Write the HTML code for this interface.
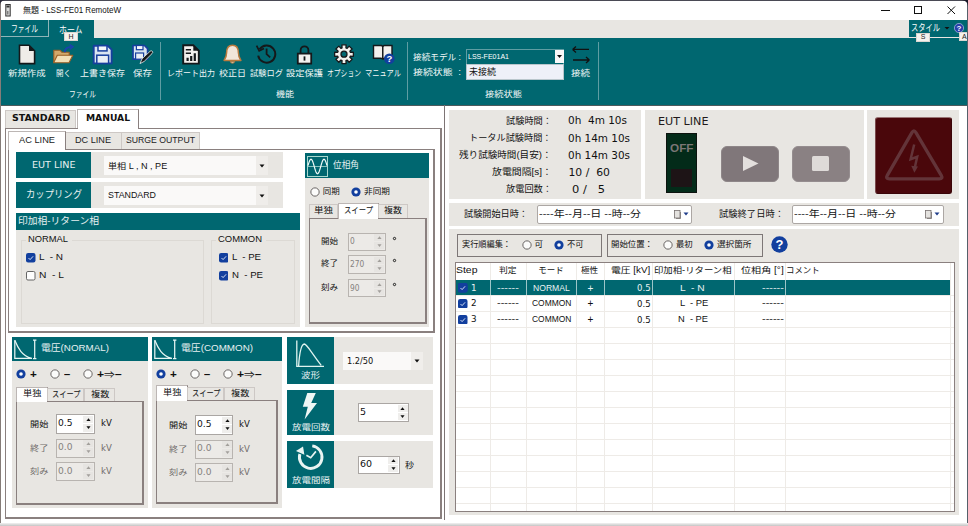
<!DOCTYPE html><html lang="ja"><head><meta charset="utf-8"><title>LSS-FE01 RemoteW</title><style>

html,body{margin:0;padding:0;}
body{width:968px;height:526px;position:relative;overflow:hidden;background:#fff;font-family:"Liberation Sans","Noto Sans CJK JP",sans-serif;}
.b{position:absolute;box-sizing:border-box;}
.t{position:absolute;white-space:pre;transform-origin:0 50%;}

#t0{left:23.00px;transform:scaleX(0.9430);}
#t1{left:10.50px;transform:scaleX(0.7102);}
#t2{left:59.40px;transform:scaleX(0.8328);}
#t3{left:911.00px;transform:scaleX(0.7628);}
#t4{left:68.47px;}
#t5{left:920.66px;}
#t6{left:962.00px;}
#t7{left:8.00px;transform:scaleX(1.1054);}
#t8{left:56.00px;transform:scaleX(0.8815);}
#t9{left:80.00px;transform:scaleX(1.0584);}
#t10{left:132.50px;transform:scaleX(1.1166);}
#t11{left:167.00px;transform:scaleX(0.9409);}
#t12{left:219.00px;transform:scaleX(1.0582);}
#t13{left:250.00px;transform:scaleX(0.9701);}
#t14{left:286.00px;transform:scaleX(1.0877);}
#t15{left:327.00px;transform:scaleX(0.7997);}
#t16{left:365.00px;transform:scaleX(0.8521);}
#t17{left:68.50px;transform:scaleX(0.7938);}
#t18{left:275.50px;transform:scaleX(1.0579);}
#t19{left:484.50px;transform:scaleX(1.0877);}
#t20{left:413.00px;transform:scaleX(1.0162);}
#t21{left:413.00px;transform:scaleX(1.1681);}
#t22{left:468.00px;transform:scaleX(0.9365);}
#t23{left:469.00px;}
#t24{left:571.00px;transform:scaleX(1.1166);}
#t25{left:11.50px;transform:scaleX(0.9944);}
#t26{left:85.50px;transform:scaleX(0.9650);}
#t27{left:18.50px;transform:scaleX(1.0281);}
#t28{left:74.50px;transform:scaleX(1.0136);}
#t29{left:125.50px;transform:scaleX(0.9648);}
#t30{left:31.75px;transform:scaleX(1.0679);}
#t31{left:107.80px;transform:scaleX(1.0682);}
#t32{left:25.50px;transform:scaleX(0.9333);}
#t33{left:107.80px;transform:scaleX(1.0407);}
#t34{left:18.00px;transform:scaleX(1.0292);}
#t35{left:27.50px;transform:scaleX(1.0997);}
#t36{left:218.00px;transform:scaleX(1.1091);}
#t37{left:38.80px;transform:scaleX(1.1725);}
#t38{left:38.80px;transform:scaleX(1.2030);}
#t39{left:231.70px;transform:scaleX(1.1296);}
#t40{left:231.70px;transform:scaleX(1.1311);}
#t41{left:332.50px;transform:scaleX(0.9624);}
#t42{left:322.75px;}
#t43{left:364.25px;transform:scaleX(1.0190);}
#t44{left:314.00px;transform:scaleX(1.1166);}
#t45{left:343.50px;transform:scaleX(0.8657);}
#t46{left:383.75px;transform:scaleX(1.0579);}
#t47{left:321.00px;}
#t48{left:349.80px;transform:scaleX(0.8761);}
#t49{left:321.00px;}
#t50{left:349.80px;transform:scaleX(0.8778);}
#t51{left:321.00px;}
#t52{left:349.80px;transform:scaleX(0.8773);}
#t53{left:40.90px;transform:scaleX(1.0880);}
#t54{left:30.00px;transform:scaleX(1.1636);}
#t55{left:64.00px;transform:scaleX(1.1294);}
#t56{left:97.40px;transform:scaleX(1.2075);}
#t57{left:22.70px;transform:scaleX(1.0814);}
#t58{left:51.65px;transform:scaleX(0.8507);}
#t59{left:90.70px;transform:scaleX(1.0814);}
#t60{left:30.00px;transform:scaleX(1.0755);}
#t61{left:58.40px;transform:scaleX(0.9597);}
#t62{left:100.60px;transform:scaleX(0.9495);}
#t63{left:30.00px;transform:scaleX(1.0755);}
#t64{left:58.40px;transform:scaleX(0.9597);}
#t65{left:100.60px;transform:scaleX(0.9495);}
#t66{left:30.00px;transform:scaleX(1.0755);}
#t67{left:58.40px;transform:scaleX(0.9597);}
#t68{left:100.60px;transform:scaleX(0.9495);}
#t69{left:180.80px;transform:scaleX(1.0909);}
#t70{left:169.90px;transform:scaleX(1.1636);}
#t71{left:203.90px;transform:scaleX(1.1294);}
#t72{left:237.30px;transform:scaleX(1.2075);}
#t73{left:162.60px;transform:scaleX(1.0814);}
#t74{left:191.55px;transform:scaleX(0.8507);}
#t75{left:230.60px;transform:scaleX(1.0814);}
#t76{left:168.70px;transform:scaleX(1.0755);}
#t77{left:197.10px;transform:scaleX(0.9597);}
#t78{left:239.30px;transform:scaleX(0.9495);}
#t79{left:168.70px;transform:scaleX(1.0755);}
#t80{left:197.10px;transform:scaleX(0.9597);}
#t81{left:239.30px;transform:scaleX(0.9495);}
#t82{left:168.70px;transform:scaleX(1.0755);}
#t83{left:197.10px;transform:scaleX(0.9597);}
#t84{left:239.30px;transform:scaleX(0.9495);}
#t85{left:301.00px;transform:scaleX(1.1166);}
#t86{left:346.60px;transform:scaleX(0.8650);}
#t87{left:291.50px;transform:scaleX(1.1171);}
#t88{left:360.00px;}
#t89{left:291.50px;transform:scaleX(1.1171);}
#t90{left:360.00px;}
#t91{left:405.00px;transform:scaleX(1.0569);}
#t92{left:505.50px;transform:scaleX(1.0219);}
#t93{left:568.30px;transform:scaleX(0.9709);}
#t94{left:469.00px;transform:scaleX(1.0183);}
#t95{left:568.30px;transform:scaleX(0.9657);}
#t96{left:459.00px;transform:scaleX(1.0632);}
#t97{left:568.30px;transform:scaleX(0.9657);}
#t98{left:491.50px;transform:scaleX(1.1006);}
#t99{left:568.50px;}
#t100{left:505.50px;transform:scaleX(1.0219);}
#t101{left:571.50px;transform:scaleX(1.0608);}
#t102{left:658.00px;transform:scaleX(1.0628);}
#t103{left:669.85px;transform:scaleX(1.1750);}
#t104{left:464.30px;transform:scaleX(1.0156);}
#t105{left:538.80px;transform:scaleX(1.2220);}
#t106{left:719.00px;transform:scaleX(1.0315);}
#t107{left:793.70px;transform:scaleX(1.2220);}
#t108{left:461.70px;transform:scaleX(0.9605);}
#t109{left:534.55px;}
#t110{left:566.95px;transform:scaleX(0.9697);}
#t111{left:611.00px;transform:scaleX(0.9879);}
#t112{left:675.65px;transform:scaleX(0.9815);}
#t113{left:716.85px;transform:scaleX(1.0113);}
#t114{left:455.50px;transform:scaleX(1.2286);}
#t115{left:499.00px;transform:scaleX(1.0226);}
#t116{left:538.30px;}
#t117{left:580.80px;transform:scaleX(1.0108);}
#t118{left:610.80px;transform:scaleX(1.1524);}
#t119{left:654.40px;transform:scaleX(1.1019);}
#t120{left:740.95px;transform:scaleX(1.1866);}
#t121{left:786.40px;transform:scaleX(0.9878);}
#t122{left:471.20px;transform:scaleX(0.9261);}
#t123{left:497.20px;transform:scaleX(1.2835);}
#t124{left:532.80px;transform:scaleX(1.0117);}
#t125{left:587.38px;}
#t126{left:637.10px;transform:scaleX(0.9492);}
#t127{left:680.00px;transform:scaleX(1.2018);}
#t128{left:761.90px;transform:scaleX(1.2835);}
#t129{left:471.20px;transform:scaleX(0.9261);}
#t130{left:497.20px;transform:scaleX(1.2835);}
#t131{left:531.60px;transform:scaleX(0.9931);}
#t132{left:587.38px;}
#t133{left:637.10px;transform:scaleX(0.9492);}
#t134{left:680.00px;transform:scaleX(1.1063);}
#t135{left:761.90px;transform:scaleX(1.2835);}
#t136{left:471.20px;transform:scaleX(0.9261);}
#t137{left:497.20px;transform:scaleX(1.2835);}
#t138{left:531.60px;transform:scaleX(0.9931);}
#t139{left:587.38px;}
#t140{left:637.10px;transform:scaleX(0.9492);}
#t141{left:678.40px;transform:scaleX(1.0946);}
#t142{left:761.90px;transform:scaleX(1.2835);}
</style></head><body>
<div class="b" style="left:0px;top:0px;width:968px;height:526px;background:#fff;"></div>
<div class="b" style="left:0px;top:0px;width:968px;height:1px;background:#4a4a55;"></div>
<div class="b" style="left:0px;top:0px;width:1.2px;height:526px;background:#857c78;"></div>
<div class="b" style="left:966.5px;top:105.5px;width:1.5px;height:417px;background:#d9d9dc;"></div>
<svg class="b" style="left:5px;top:3.5px;" width="6" height="13" viewBox="0 0 6 13"><rect x="0.8" y="0.5" width="4.4" height="11.5" fill="#d9d9d9" stroke="#333" stroke-width="1"/><rect x="1.5" y="1.5" width="3" height="2" fill="#333"/><rect x="2.2" y="7" width="1.2" height="3.5" fill="#666"/></svg>
<span class="t" id="t0" style="top:4.90px;font-size:8.5px;line-height:10.20px;color:#111;">無題 - LSS-FE01 RemoteW</span>
<svg class="b" style="left:880px;top:5px;" width="12" height="12" viewBox="0 0 12 12"><path d="M1 5.5H10" stroke="#111" stroke-width="1" fill="none"/></svg>
<svg class="b" style="left:913px;top:5px;" width="12" height="12" viewBox="0 0 12 12"><rect x="1.5" y="1.5" width="7" height="7" stroke="#111" stroke-width="1" fill="none"/></svg>
<svg class="b" style="left:946px;top:5px;" width="12" height="12" viewBox="0 0 12 12"><path d="M1.5 1.5L9 9M9 1.5L1.5 9" stroke="#111" stroke-width="1" fill="none"/></svg>
<div class="b" style="left:1px;top:20px;width:967px;height:18px;background:#e8e6e2;"></div>
<div class="b" style="left:1px;top:20px;width:93px;height:18px;background:#006770;"></div>
<div class="b" style="left:1px;top:20px;width:48px;height:17px;background:#006770;border-right:1px solid #8fb5b8;border-bottom:1px solid #8fb5b8;"></div>
<span class="t" id="t1" style="top:23.30px;font-size:9.5px;line-height:11.40px;color:#fff;">ファイル</span>
<span class="t" id="t2" style="top:23.50px;font-size:9.5px;line-height:11.40px;color:#fff;">ホーム</span>
<div class="b" style="left:909px;top:20px;width:59px;height:17px;background:#006770;"></div>
<span class="t" id="t3" style="top:22.30px;font-size:9.5px;line-height:11.40px;color:#fff;">スタイル</span>
<svg class="b" style="left:944px;top:25px;" width="6" height="6" viewBox="0 0 6 6"><path d="M0.5 2L5.5 2L3 4.5Z" fill="#111"/></svg>
<svg class="b" style="left:954px;top:23px;" width="10" height="10" viewBox="0 0 10 10"><circle cx="5" cy="5" r="4.6" fill="#2a3fa8" stroke="#c9d2f5" stroke-width="0.6"/><text x="5" y="8" font-size="8" font-weight="bold" fill="#fff" text-anchor="middle" font-family="Liberation Sans,sans-serif">?</text></svg>
<div class="b" style="left:1px;top:37.5px;width:967px;height:67px;background:#006770;"></div>
<div class="b" style="left:1px;top:104.5px;width:967px;height:1px;background:#4d5a5c;"></div>
<div class="b" style="left:64px;top:32px;width:14px;height:9px;background:#f4f2ee;border:1px solid #d9d6d0;"></div>
<span class="t" id="t4" style="top:32.60px;font-size:7px;line-height:8.40px;color:#222;">H</span>
<div class="b" style="left:916px;top:32.5px;width:14px;height:9px;background:#f4f2ee;border:1px solid #d9d6d0;"></div>
<span class="t" id="t5" style="top:33.00px;font-size:7px;line-height:8.40px;color:#222;">S</span>
<div class="b" style="left:959px;top:32px;width:9px;height:9px;background:#f4f2ee;border:1px solid #d9d6d0;"></div>
<span class="t" id="t6" style="top:32.60px;font-size:7px;line-height:8.40px;color:#222;">A</span>
<div class="b" style="left:160px;top:42px;width:1px;height:58px;background:#5f9da3;"></div>
<div class="b" style="left:407px;top:42px;width:1px;height:58px;background:#5f9da3;"></div>
<div class="b" style="left:598px;top:42px;width:1px;height:58px;background:#5f9da3;"></div>
<span class="t" id="t7" style="top:67.50px;font-size:8.5px;line-height:10.20px;color:#f2f7f7;">新規作成</span>
<span class="t" id="t8" style="top:67.50px;font-size:8.5px;line-height:10.20px;color:#f2f7f7;">開く</span>
<span class="t" id="t9" style="top:67.50px;font-size:8.5px;line-height:10.20px;color:#f2f7f7;">上書き保存</span>
<span class="t" id="t10" style="top:67.50px;font-size:8.5px;line-height:10.20px;color:#f2f7f7;">保存</span>
<span class="t" id="t11" style="top:67.50px;font-size:8.5px;line-height:10.20px;color:#f2f7f7;">レポート出力</span>
<span class="t" id="t12" style="top:67.50px;font-size:8.5px;line-height:10.20px;color:#f2f7f7;">校正日</span>
<span class="t" id="t13" style="top:67.50px;font-size:8.5px;line-height:10.20px;color:#f2f7f7;">試験ログ</span>
<span class="t" id="t14" style="top:67.50px;font-size:8.5px;line-height:10.20px;color:#f2f7f7;">設定保護</span>
<span class="t" id="t15" style="top:67.50px;font-size:8.5px;line-height:10.20px;color:#f2f7f7;">オプション</span>
<span class="t" id="t16" style="top:67.50px;font-size:8.5px;line-height:10.20px;color:#f2f7f7;">マニュアル</span>
<span class="t" id="t17" style="top:88.90px;font-size:8.5px;line-height:10.20px;color:#f2f7f7;">ファイル</span>
<span class="t" id="t18" style="top:88.90px;font-size:8.5px;line-height:10.20px;color:#f2f7f7;">機能</span>
<span class="t" id="t19" style="top:88.90px;font-size:8.5px;line-height:10.20px;color:#f2f7f7;">接続状態</span>
<span class="t" id="t20" style="top:51.90px;font-size:8.5px;line-height:10.20px;color:#f2f7f7;">接続モデル :</span>
<span class="t" id="t21" style="top:67.40px;font-size:8.5px;line-height:10.20px;color:#f2f7f7;">接続状態  :</span>
<div class="b" style="left:466px;top:48.7px;width:98px;height:15.3px;background:#006770;border:1px solid #5f9da3;border-bottom:none;"></div>
<span class="t" id="t22" style="top:52.30px;font-size:7.5px;line-height:9.00px;color:#fff;">LSS-FE01A1</span>
<div class="b" style="left:555px;top:50px;width:9px;height:13px;background:#f8f8f8;"></div>
<svg class="b" style="left:556px;top:54px;" width="7" height="5" viewBox="0 0 7 5"><path d="M1 1L6 1L3.5 4Z" fill="#111"/></svg>
<div class="b" style="left:466px;top:64px;width:98px;height:16px;background:#eef0f8;border:1px solid #b9c6cc;"></div>
<span class="t" id="t23" style="top:67.10px;font-size:9px;line-height:10.80px;color:#111;">未接続</span>
<svg class="b" style="left:571px;top:45px;" width="20" height="20" viewBox="0 0 20 20"><path d="M1.6 4.4H18M1.6 4.4L5 1.4M1.6 4.4L5 7.4M18.4 15H2M18.4 15L15 12M18.4 15L15 18" stroke="#111" stroke-width="1.3" fill="none"/></svg>
<span class="t" id="t24" style="top:67.90px;font-size:8.5px;line-height:10.20px;color:#f2f7f7;">接続</span>
<svg class="b" style="left:17.5px;top:44px;" width="19" height="21" viewBox="0 0 19 21"><path d="M1.5 1.3H11L16.6 6.9V19.6H1.5Z" fill="#efece8" stroke="#15181a" stroke-width="1.6"/><path d="M11 1.3V6.9H16.6Z" fill="#15181a"/></svg>
<svg class="b" style="left:52px;top:44px;" width="23" height="20" viewBox="0 0 23 20"><path d="M1.8 18.6V6.3H8.2L9.8 8.2H17.2V11.5" fill="#d2a86a" stroke="#9a5f24" stroke-width="1.1" stroke-linejoin="round"/><path d="M5.3 11.2H20.8L17 18.8H1.6Z" fill="#f2dfb6" stroke="#9a5f24" stroke-width="1.1" stroke-linejoin="round"/><path d="M12.8 8.3C12.8 4.8 15.2 2.8 19.2 2.8" stroke="#1b43ad" stroke-width="1.8" fill="none"/><path d="M17.6 0.6L21 2.9L17.6 5.4" stroke="#1b43ad" stroke-width="1.5" fill="none"/></svg>
<svg class="b" style="left:92px;top:44px;" width="21" height="21" viewBox="0 0 21 21"><path d="M1.7 1.7H15.6L19.6 5.7V19.4H1.7Z" fill="#d9e5f1" stroke="#173f9e" stroke-width="1.9" stroke-linejoin="round"/><rect x="6" y="1.7" width="9" height="5.2" fill="#f4f7fb" stroke="#173f9e" stroke-width="1.5"/><rect x="4.8" y="11.2" width="11.8" height="8.2" fill="#e9eff6" stroke="#173f9e" stroke-width="1.5"/></svg>
<svg class="b" style="left:131px;top:44px;" width="24" height="21" viewBox="0 0 24 21"><path d="M2 1.5H13.5L16.6 4.6V15.2H2Z" fill="#d9e5f1" stroke="#173f9e" stroke-width="1.7" stroke-linejoin="round"/><rect x="5.4" y="1.5" width="6.6" height="4.2" fill="#f4f7fb" stroke="#173f9e" stroke-width="1.2"/><rect x="4.6" y="9" width="8" height="6.2" fill="#e9eff6" stroke="#173f9e" stroke-width="1.2"/><path d="M9 19.6L11 14.8L19.2 7.2Q20.6 6.3 21.4 7.4Q22.2 8.5 21 9.6L13.2 17.4Z" fill="#15181a" stroke="#f0f0f0" stroke-width="0.8"/></svg>
<svg class="b" style="left:182.4px;top:43.8px;" width="18" height="21" viewBox="0 0 18 21"><path d="M1.2 1.2H11.3L16.8 6.7V19.6H1.2Z" fill="#f3f1ee" stroke="#15181a" stroke-width="1.9"/><path d="M11.3 1.2V6.7H16.8Z" fill="#15181a"/><path d="M3.8 5.8H9M3.8 9.2H9" stroke="#15181a" stroke-width="1.5"/><path d="M5.6 17V13.8M9.2 17V12M12.8 17V9.2" stroke="#15181a" stroke-width="2.2"/></svg>
<svg class="b" style="left:223.3px;top:43.6px;" width="19" height="21" viewBox="0 0 19 21"><path d="M9.5 1.2C4.9 1.2 3.6 5 3.6 8.8C3.6 12.6 2.6 14.3 1.1 16.4H17.9C16.4 14.3 15.4 12.6 15.4 8.8C15.4 5 14.1 1.2 9.5 1.2Z" fill="#f1e6da" stroke="#b97a3e" stroke-width="1.5" stroke-linejoin="round"/><path d="M7.2 17.6A2.4 2.4 0 0 0 11.8 17.6Z" fill="#d9c3a8" stroke="#b97a3e" stroke-width="0.8"/></svg>
<svg class="b" style="left:254.6px;top:43px;" width="22" height="22" viewBox="0 0 22 22"><path d="M4.6 6.2A8.6 8.6 0 1 1 3.2 12.6" fill="none" stroke="#15181a" stroke-width="2"/><path d="M1.6 2.6L4.2 7.8L9 5.4" fill="none" stroke="#15181a" stroke-width="1.7"/><path d="M11.6 5.5V11.2L15.2 14.4" fill="none" stroke="#15181a" stroke-width="1.8"/></svg>
<svg class="b" style="left:296.3px;top:43.8px;" width="17" height="21" viewBox="0 0 17 21"><path d="M4.6 9.6V6.2A3.9 3.9 0 0 1 12.4 6.2V9.6" fill="none" stroke="#15181a" stroke-width="1.8"/><rect x="1.8" y="9.6" width="13.4" height="10" fill="#f3f1ee" stroke="#15181a" stroke-width="1.8"/><rect x="7.6" y="12.4" width="1.8" height="4.2" fill="#15181a"/></svg>
<svg class="b" style="left:334px;top:44px;" width="20" height="21" viewBox="0 0 20 21"><g transform="translate(10,10.2)"><path d="M-1.95 -6.31L-2.10 -9.37L2.10 -9.37L1.95 -6.31L3.08 -5.84L5.14 -8.11L8.11 -5.14L5.84 -3.08L6.31 -1.95L9.37 -2.10L9.37 2.10L6.31 1.95L5.84 3.08L8.11 5.14L5.14 8.11L3.08 5.84L1.95 6.31L2.10 9.37L-2.10 9.37L-1.95 6.31L-3.08 5.84L-5.14 8.11L-8.11 5.14L-5.84 3.08L-6.31 1.95L-9.37 2.10L-9.37 -2.10L-6.31 -1.95L-5.84 -3.08L-8.11 -5.14L-5.14 -8.11L-3.08 -5.84Z" fill="#f3f1ee" stroke="#15181a" stroke-width="1.3" stroke-linejoin="round"/><circle r="3" fill="#006770" stroke="#15181a" stroke-width="1.3"/></g></svg>
<svg class="b" style="left:372px;top:44px;" width="23" height="21" viewBox="0 0 23 21"><path d="M1.5 1.5H9.5Q10.8 2 10.8 3.2V15.5Q10.2 14.3 9 14.3H1.5Z" fill="#f3f1ee" stroke="#15181a" stroke-width="1.4"/><path d="M20 1.5H12Q10.8 2 10.8 3.2V15.5Q11.4 14.3 12.6 14.3H20Z" fill="#f3f1ee" stroke="#15181a" stroke-width="1.4"/><circle cx="17.3" cy="14.7" r="5.3" fill="#123f9e"/><text x="17.3" y="18" font-size="9.5" font-weight="bold" fill="#fff" text-anchor="middle" font-family="Liberation Sans,sans-serif">?</text></svg>
<div class="b" style="left:443.5px;top:105px;width:1.5px;height:414.5px;background:#7d7474;"></div>
<div class="b" style="left:0px;top:522.5px;width:968px;height:3.5px;background:linear-gradient(#f2f2f2,#c4c4c4);"></div>
<div class="b" style="left:5px;top:110px;width:71px;height:19px;background:#e8e6e2;border:1px solid #cdc8c5;border-bottom:none;"></div>
<div class="b" style="left:77px;top:108.5px;width:62px;height:20.5px;background:#fff;border:1px solid #bcb6b4;border-bottom:none;border-right:1px solid #8a807f;"></div>
<span class="t" id="t25" style="top:112.30px;font-size:9.5px;line-height:11.40px;color:#111;font-weight:bold;font-family:'DejaVu Sans','Liberation Sans',sans-serif;">STANDARD</span>
<span class="t" id="t26" style="top:112.30px;font-size:9.5px;line-height:11.40px;color:#111;font-weight:bold;font-family:'DejaVu Sans','Liberation Sans',sans-serif;">MANUAL</span>
<div class="b" style="left:5px;top:128px;width:437px;height:391px;background:#fff;border:1px solid #8a807f;border-right:2px solid #8a807f;border-bottom:2px solid #8a807f;"></div>
<div class="b" style="left:78px;top:128px;width:60px;height:1px;background:#fff;"></div>
<div class="b" style="left:65px;top:132px;width:57px;height:17px;background:#e8e6e2;border:1px solid #cdc8c5;border-bottom:none;"></div>
<div class="b" style="left:121px;top:132px;width:79px;height:17px;background:#e8e6e2;border:1px solid #cdc8c5;border-bottom:none;"></div>
<div class="b" style="left:8px;top:149px;width:427px;height:183.5px;background:#fff;border:1px solid #8a807f;border-right:2px solid #8a807f;border-bottom:2px solid #8a807f;"></div>
<div class="b" style="left:8px;top:131px;width:58px;height:19px;background:#fff;border:1px solid #bcb6b4;border-bottom:none;border-right:1.5px solid #8a807f;"></div>
<span class="t" id="t27" style="top:134.60px;font-size:9px;line-height:10.80px;color:#222;">AC LINE</span>
<span class="t" id="t28" style="top:134.60px;font-size:9px;line-height:10.80px;color:#222;">DC LINE</span>
<span class="t" id="t29" style="top:134.60px;font-size:9px;line-height:10.80px;color:#222;">SURGE OUTPUT</span>
<div class="b" style="left:16px;top:152.3px;width:267px;height:25.8px;background:#e8e6e2;"></div>
<div class="b" style="left:16px;top:152.3px;width:75px;height:25.8px;background:#006770;"></div>
<span class="t" id="t30" style="top:160.00px;font-size:9px;line-height:10.80px;color:#e6f0f0;font-family:'DejaVu Sans','Liberation Sans',sans-serif;">EUT LINE</span>
<div class="b" style="left:104.3px;top:156.0px;width:164px;height:18.7px;background:#faf9f8;"></div>
<div class="b" style="left:256.3px;top:156.0px;width:12px;height:18.7px;background:#efedea;"></div>
<span class="t" id="t31" style="top:160.50px;font-size:8.5px;line-height:10.20px;color:#111;">単相 L , N , PE</span>
<svg class="b" style="left:259px;top:163.70000000000002px;" width="6" height="4" viewBox="0 0 6 4"><path d="M0.5 0.5L5.5 0.5L3 3.5Z" fill="#111"/></svg>
<div class="b" style="left:16px;top:182.3px;width:267px;height:25.6px;background:#e8e6e2;"></div>
<div class="b" style="left:16px;top:182.3px;width:75px;height:25.6px;background:#006770;"></div>
<span class="t" id="t32" style="top:189.10px;font-size:10px;line-height:12.00px;color:#e6f0f0;">カップリング</span>
<div class="b" style="left:104.3px;top:186.0px;width:164px;height:18.7px;background:#faf9f8;"></div>
<div class="b" style="left:256.3px;top:186.0px;width:12px;height:18.7px;background:#efedea;"></div>
<span class="t" id="t33" style="top:190.40px;font-size:8.5px;line-height:10.20px;color:#111;">STANDARD</span>
<svg class="b" style="left:259px;top:193.60000000000002px;" width="6" height="4" viewBox="0 0 6 4"><path d="M0.5 0.5L5.5 0.5L3 3.5Z" fill="#111"/></svg>
<div class="b" style="left:16px;top:212.8px;width:284.3px;height:17px;background:#006770;"></div>
<span class="t" id="t34" style="top:215.30px;font-size:9.5px;line-height:11.40px;color:#e6f0f0;">印加相-リターン相</span>
<div class="b" style="left:16px;top:229.8px;width:284.3px;height:97.2px;background:#e8e6e2;"></div>
<div class="b" style="left:20.5px;top:239.5px;width:183px;height:84px;border:1px solid #dcd9d4;"></div>
<div class="b" style="left:25.5px;top:236.5px;width:46px;height:7px;background:#e8e6e2;"></div>
<span class="t" id="t35" style="top:234.40px;font-size:8.5px;line-height:10.20px;color:#111;">NORMAL</span>
<div class="b" style="left:211px;top:239.5px;width:84px;height:84px;border:1px solid #dcd9d4;"></div>
<div class="b" style="left:216px;top:236.5px;width:50px;height:7px;background:#e8e6e2;"></div>
<span class="t" id="t36" style="top:234.40px;font-size:8.5px;line-height:10.20px;color:#111;">COMMON</span>
<svg class="b" style="left:26px;top:253.25px;" width="9.5" height="9.5" viewBox="0 0 9.5 9.5"><rect x="0" y="0" width="9.5" height="9.5" rx="2.1" fill="#123f9e"/><path d="M2.5 5L4.1 6.6L7.1 3.3" stroke="#e8eefc" stroke-width="0.9" fill="none"/></svg>
<span class="t" id="t37" style="top:251.90px;font-size:8.5px;line-height:10.20px;color:#111;">L  - N</span>
<svg class="b" style="left:26px;top:271.25px;" width="9.5" height="9.5" viewBox="0 0 9.5 9.5"><rect x="0.5" y="0.5" width="8.5" height="8.5" rx="1.4" fill="#fdfdfd" stroke="#555" stroke-width="0.9"/></svg>
<span class="t" id="t38" style="top:269.90px;font-size:8.5px;line-height:10.20px;color:#111;">N  - L</span>
<svg class="b" style="left:218.9px;top:253.25px;" width="9.5" height="9.5" viewBox="0 0 9.5 9.5"><rect x="0" y="0" width="9.5" height="9.5" rx="2.1" fill="#123f9e"/><path d="M2.5 5L4.1 6.6L7.1 3.3" stroke="#e8eefc" stroke-width="0.9" fill="none"/></svg>
<span class="t" id="t39" style="top:251.90px;font-size:8.5px;line-height:10.20px;color:#111;">L  - PE</span>
<svg class="b" style="left:218.9px;top:271.25px;" width="9.5" height="9.5" viewBox="0 0 9.5 9.5"><rect x="0" y="0" width="9.5" height="9.5" rx="2.1" fill="#123f9e"/><path d="M2.5 5L4.1 6.6L7.1 3.3" stroke="#e8eefc" stroke-width="0.9" fill="none"/></svg>
<span class="t" id="t40" style="top:269.90px;font-size:8.5px;line-height:10.20px;color:#111;">N  - PE</span>
<div class="b" style="left:305px;top:153px;width:124px;height:25px;background:#006770;"></div>
<div class="b" style="left:305px;top:177.5px;width:124px;height:149px;background:#e8e6e2;"></div>
<svg class="b" style="left:307px;top:155.5px;" width="21" height="21" viewBox="0 0 21 21"><rect x="0.5" y="0.5" width="20" height="20" fill="none" stroke="#a8d8cf" stroke-width="1"/><path d="M0.5 10.5H20.5" stroke="#a8d8cf" stroke-width="0.8"/><polyline points="1.0,9.62 1.5,7.91 2.0,6.35 2.5,5.04 3.0,4.04 3.5,3.41 4.0,3.20 4.5,3.41 5.0,4.04 5.5,5.04 6.0,6.35 6.5,7.91 7.0,9.62 7.5,11.38 8.0,13.09 8.5,14.65 9.0,15.96 9.5,16.96 10.0,17.59 10.5,17.80 11.0,17.59 11.5,16.96 12.0,15.96 12.5,14.65 13.0,13.09 13.5,11.38 14.0,9.62 14.5,7.91 15.0,6.35 15.5,5.04 16.0,4.04 16.5,3.41 17.0,3.20 17.5,3.41 18.0,4.04 18.5,5.04 19.0,6.35 19.5,7.91 20.0,9.62" stroke="#f2fbf9" stroke-width="1.2" fill="none"/></svg>
<span class="t" id="t41" style="top:159.60px;font-size:9px;line-height:10.80px;color:#e6f0f0;">位相角</span>
<svg class="b" style="left:309.5px;top:186.5px;" width="10" height="10" viewBox="0 0 10 10"><circle cx="5" cy="5" r="4.15" fill="#fbfbfa" stroke="#5a5655" stroke-width="0.9"/></svg>
<span class="t" id="t42" style="top:185.90px;font-size:8.5px;line-height:10.20px;color:#111;">同期</span>
<svg class="b" style="left:350.5px;top:186.5px;" width="10" height="10" viewBox="0 0 10 10"><circle cx="5" cy="5" r="4.6" fill="#123f9e"/><circle cx="5" cy="5" r="1.8" fill="#fff"/></svg>
<span class="t" id="t43" style="top:185.90px;font-size:8.5px;line-height:10.20px;color:#111;">非同期</span>
<div class="b" style="left:309px;top:218.0px;width:117.5px;height:106px;background:#e8e6e2;border:1px solid #8a807f;border-right:2px solid #8a807f;border-bottom:2px solid #8a807f;"></div>
<div class="b" style="left:309px;top:204.4px;width:29px;height:13.6px;background:#e8e6e2;border:1px solid #cdc8c5;border-bottom:none;"></div>
<span class="t" id="t44" style="top:205.30px;font-size:8.5px;line-height:10.20px;color:#111;">単独</span>
<div class="b" style="left:337.5px;top:203.20000000000002px;width:41px;height:15.8px;background:#fff;border:1px solid #bcb6b4;border-bottom:none;border-right:1.5px solid #8a807f;"></div>
<span class="t" id="t45" style="top:204.80px;font-size:8.5px;line-height:10.20px;color:#111;">スイープ</span>
<div class="b" style="left:378px;top:204.4px;width:29.5px;height:13.6px;background:#e8e6e2;border:1px solid #cdc8c5;border-bottom:none;"></div>
<span class="t" id="t46" style="top:205.30px;font-size:8.5px;line-height:10.20px;color:#111;">複数</span>
<span class="t" id="t47" style="top:235.80px;font-size:8.5px;line-height:10.20px;color:#111;">開始</span>
<div class="b" style="left:347.6px;top:232.70000000000002px;width:38px;height:18.4px;background:#eceae7;border:1px solid #b8b4b0;"></div>
<div class="b" style="left:374.3px;top:234.3px;width:10.1px;height:6.8999999999999995px;background:#e6e4e1;"></div>
<div class="b" style="left:374.3px;top:242.20000000000002px;width:10.1px;height:6.8999999999999995px;background:#e6e4e1;"></div>
<svg class="b" style="left:376.8px;top:236.15px;" width="5" height="3.2" viewBox="0 0 5 3.2"><path d="M0.4 3L4.6 3L2.5 0.3Z" fill="#a29f9b"/></svg>
<svg class="b" style="left:376.8px;top:244.05000000000004px;" width="5" height="3.2" viewBox="0 0 5 3.2"><path d="M0.4 0.2L4.6 0.2L2.5 2.9Z" fill="#a29f9b"/></svg>
<span class="t" id="t48" style="top:236.20px;font-size:8.5px;line-height:10.20px;color:#868280;font-family:'DejaVu Sans','Liberation Sans',sans-serif;">0</span>
<svg class="b" style="left:391.5px;top:235.6px;" width="5" height="5" viewBox="0 0 5 5"><circle cx="2.5" cy="2.5" r="1.15" fill="none" stroke="#1a1a1a" stroke-width="1"/></svg>
<span class="t" id="t49" style="top:258.30px;font-size:8.5px;line-height:10.20px;color:#111;">終了</span>
<div class="b" style="left:347.6px;top:255.2px;width:38px;height:18.4px;background:#eceae7;border:1px solid #b8b4b0;"></div>
<div class="b" style="left:374.3px;top:256.8px;width:10.1px;height:6.8999999999999995px;background:#e6e4e1;"></div>
<div class="b" style="left:374.3px;top:264.7px;width:10.1px;height:6.8999999999999995px;background:#e6e4e1;"></div>
<svg class="b" style="left:376.8px;top:258.65px;" width="5" height="3.2" viewBox="0 0 5 3.2"><path d="M0.4 3L4.6 3L2.5 0.3Z" fill="#a29f9b"/></svg>
<svg class="b" style="left:376.8px;top:266.54999999999995px;" width="5" height="3.2" viewBox="0 0 5 3.2"><path d="M0.4 0.2L4.6 0.2L2.5 2.9Z" fill="#a29f9b"/></svg>
<span class="t" id="t50" style="top:258.70px;font-size:8.5px;line-height:10.20px;color:#868280;font-family:'DejaVu Sans','Liberation Sans',sans-serif;">270</span>
<svg class="b" style="left:391.5px;top:258.09999999999997px;" width="5" height="5" viewBox="0 0 5 5"><circle cx="2.5" cy="2.5" r="1.15" fill="none" stroke="#1a1a1a" stroke-width="1"/></svg>
<span class="t" id="t51" style="top:282.20px;font-size:8.5px;line-height:10.20px;color:#111;">刻み</span>
<div class="b" style="left:347.6px;top:279.1px;width:38px;height:18.4px;background:#eceae7;border:1px solid #b8b4b0;"></div>
<div class="b" style="left:374.3px;top:280.70000000000005px;width:10.1px;height:6.8999999999999995px;background:#e6e4e1;"></div>
<div class="b" style="left:374.3px;top:288.6px;width:10.1px;height:6.8999999999999995px;background:#e6e4e1;"></div>
<svg class="b" style="left:376.8px;top:282.55px;" width="5" height="3.2" viewBox="0 0 5 3.2"><path d="M0.4 3L4.6 3L2.5 0.3Z" fill="#a29f9b"/></svg>
<svg class="b" style="left:376.8px;top:290.45px;" width="5" height="3.2" viewBox="0 0 5 3.2"><path d="M0.4 0.2L4.6 0.2L2.5 2.9Z" fill="#a29f9b"/></svg>
<span class="t" id="t52" style="top:282.60px;font-size:8.5px;line-height:10.20px;color:#868280;font-family:'DejaVu Sans','Liberation Sans',sans-serif;">90</span>
<svg class="b" style="left:391.5px;top:282.0px;" width="5" height="5" viewBox="0 0 5 5"><circle cx="2.5" cy="2.5" r="1.15" fill="none" stroke="#1a1a1a" stroke-width="1"/></svg>
<div class="b" style="left:12.4px;top:337px;width:135.4px;height:23.5px;background:#006770;"></div>
<div class="b" style="left:12.4px;top:360.5px;width:135.4px;height:147px;background:#e8e6e2;"></div>
<svg class="b" style="left:13.4px;top:338.5px;" width="25" height="21" viewBox="0 0 25 21"><path d="M1.8 1.2V19.3H19" stroke="#e6f5f2" stroke-width="1.25" fill="none"/><path d="M1.8 1.2C5 9 9 17 18.5 19.3" stroke="#e6f5f2" stroke-width="1.25" fill="none"/><path d="M21.7 1.2V19.6M20 1.2H23.4M20 19.6H23.4" stroke="#e6f5f2" stroke-width="1.25" fill="none"/></svg>
<span class="t" id="t53" style="top:342.90px;font-size:9px;line-height:10.80px;color:#e6f0f0;">電圧(NORMAL)</span>
<svg class="b" style="left:16.4px;top:369px;" width="10" height="10" viewBox="0 0 10 10"><circle cx="5" cy="5" r="4.6" fill="#123f9e"/><circle cx="5" cy="5" r="1.8" fill="#fff"/></svg>
<span class="t" id="t54" style="top:368.90px;font-size:10px;line-height:12.00px;color:#111;font-weight:bold;">+</span>
<svg class="b" style="left:49.699999999999996px;top:369px;" width="10" height="10" viewBox="0 0 10 10"><circle cx="5" cy="5" r="4.15" fill="#fbfbfa" stroke="#5a5655" stroke-width="0.9"/></svg>
<span class="t" id="t55" style="top:368.90px;font-size:10px;line-height:12.00px;color:#111;font-weight:bold;">−</span>
<svg class="b" style="left:82.9px;top:369px;" width="10" height="10" viewBox="0 0 10 10"><circle cx="5" cy="5" r="4.15" fill="#fbfbfa" stroke="#5a5655" stroke-width="0.9"/></svg>
<span class="t" id="t56" style="top:368.90px;font-size:10px;line-height:12.00px;color:#111;font-weight:bold;">+<span style="font-weight:normal;font-size:9px">⇒</span>−</span>
<div class="b" style="left:16.4px;top:401.3px;width:128px;height:103.5px;background:#e8e6e2;border:1px solid #8a807f;border-right:2px solid #8a807f;border-bottom:2px solid #8a807f;"></div>
<div class="b" style="left:15.899999999999999px;top:386.5px;width:32px;height:15.8px;background:#fff;border:1px solid #bcb6b4;border-bottom:none;border-right:1.5px solid #8a807f;"></div>
<span class="t" id="t57" style="top:388.10px;font-size:8.5px;line-height:10.20px;color:#111;">単独</span>
<div class="b" style="left:47.4px;top:387.7px;width:37px;height:13.6px;background:#e8e6e2;border:1px solid #cdc8c5;border-bottom:none;"></div>
<span class="t" id="t58" style="top:388.60px;font-size:8.5px;line-height:10.20px;color:#111;">スイープ</span>
<div class="b" style="left:84.4px;top:387.7px;width:31px;height:13.6px;background:#e8e6e2;border:1px solid #cdc8c5;border-bottom:none;"></div>
<span class="t" id="t59" style="top:388.60px;font-size:8.5px;line-height:10.20px;color:#111;">複数</span>
<span class="t" id="t60" style="top:418.50px;font-size:8.5px;line-height:10.20px;color:#111;">開始</span>
<div class="b" style="left:56.199999999999996px;top:414.4px;width:38.5px;height:19.2px;background:#fff;border:1px solid #aaa6a3;"></div>
<div class="b" style="left:83.39999999999999px;top:416.0px;width:10.1px;height:7.3px;background:#efeeec;"></div>
<div class="b" style="left:83.39999999999999px;top:424.29999999999995px;width:10.1px;height:7.3px;background:#efeeec;"></div>
<svg class="b" style="left:85.89999999999999px;top:418.04999999999995px;" width="5" height="3.2" viewBox="0 0 5 3.2"><path d="M0.4 3L4.6 3L2.5 0.3Z" fill="#111"/></svg>
<svg class="b" style="left:85.89999999999999px;top:426.34999999999997px;" width="5" height="3.2" viewBox="0 0 5 3.2"><path d="M0.4 0.2L4.6 0.2L2.5 2.9Z" fill="#111"/></svg>
<span class="t" id="t61" style="top:417.10px;font-size:9.5px;line-height:11.40px;color:#111;font-family:'DejaVu Sans','Liberation Sans',sans-serif;">0.5</span>
<span class="t" id="t62" style="top:418.40px;font-size:9px;line-height:10.80px;color:#111;font-family:'DejaVu Sans','Liberation Sans',sans-serif;">kV</span>
<span class="t" id="t63" style="top:442.60px;font-size:8.5px;line-height:10.20px;color:#706c6a;">終了</span>
<div class="b" style="left:56.199999999999996px;top:438.5px;width:38.5px;height:19.2px;background:#eceae7;border:1px solid #b8b4b0;"></div>
<div class="b" style="left:83.39999999999999px;top:440.1px;width:10.1px;height:7.3px;background:#e6e4e1;"></div>
<div class="b" style="left:83.39999999999999px;top:448.4px;width:10.1px;height:7.3px;background:#e6e4e1;"></div>
<svg class="b" style="left:85.89999999999999px;top:442.15px;" width="5" height="3.2" viewBox="0 0 5 3.2"><path d="M0.4 3L4.6 3L2.5 0.3Z" fill="#a29f9b"/></svg>
<svg class="b" style="left:85.89999999999999px;top:450.45px;" width="5" height="3.2" viewBox="0 0 5 3.2"><path d="M0.4 0.2L4.6 0.2L2.5 2.9Z" fill="#a29f9b"/></svg>
<span class="t" id="t64" style="top:441.20px;font-size:9.5px;line-height:11.40px;color:#868280;font-family:'DejaVu Sans','Liberation Sans',sans-serif;">0.0</span>
<span class="t" id="t65" style="top:442.50px;font-size:9px;line-height:10.80px;color:#706c6a;font-family:'DejaVu Sans','Liberation Sans',sans-serif;">kV</span>
<span class="t" id="t66" style="top:466.20px;font-size:8.5px;line-height:10.20px;color:#706c6a;">刻み</span>
<div class="b" style="left:56.199999999999996px;top:462.09999999999997px;width:38.5px;height:19.2px;background:#eceae7;border:1px solid #b8b4b0;"></div>
<div class="b" style="left:83.39999999999999px;top:463.7px;width:10.1px;height:7.3px;background:#e6e4e1;"></div>
<div class="b" style="left:83.39999999999999px;top:471.99999999999994px;width:10.1px;height:7.3px;background:#e6e4e1;"></div>
<svg class="b" style="left:85.89999999999999px;top:465.74999999999994px;" width="5" height="3.2" viewBox="0 0 5 3.2"><path d="M0.4 3L4.6 3L2.5 0.3Z" fill="#a29f9b"/></svg>
<svg class="b" style="left:85.89999999999999px;top:474.04999999999995px;" width="5" height="3.2" viewBox="0 0 5 3.2"><path d="M0.4 0.2L4.6 0.2L2.5 2.9Z" fill="#a29f9b"/></svg>
<span class="t" id="t67" style="top:464.80px;font-size:9.5px;line-height:11.40px;color:#868280;font-family:'DejaVu Sans','Liberation Sans',sans-serif;">0.0</span>
<span class="t" id="t68" style="top:466.10px;font-size:9px;line-height:10.80px;color:#706c6a;font-family:'DejaVu Sans','Liberation Sans',sans-serif;">kV</span>
<div class="b" style="left:152.3px;top:337px;width:129.6px;height:23.5px;background:#006770;"></div>
<div class="b" style="left:152.3px;top:360.5px;width:129.6px;height:147px;background:#e8e6e2;"></div>
<svg class="b" style="left:153.3px;top:338.5px;" width="25" height="21" viewBox="0 0 25 21"><path d="M1.8 1.2V19.3H19" stroke="#e6f5f2" stroke-width="1.25" fill="none"/><path d="M1.8 1.2C5 9 9 17 18.5 19.3" stroke="#e6f5f2" stroke-width="1.25" fill="none"/><path d="M21.7 1.2V19.6M20 1.2H23.4M20 19.6H23.4" stroke="#e6f5f2" stroke-width="1.25" fill="none"/></svg>
<span class="t" id="t69" style="top:342.90px;font-size:9px;line-height:10.80px;color:#e6f0f0;">電圧(COMMON)</span>
<svg class="b" style="left:156.3px;top:369px;" width="10" height="10" viewBox="0 0 10 10"><circle cx="5" cy="5" r="4.6" fill="#123f9e"/><circle cx="5" cy="5" r="1.8" fill="#fff"/></svg>
<span class="t" id="t70" style="top:368.90px;font-size:10px;line-height:12.00px;color:#111;font-weight:bold;">+</span>
<svg class="b" style="left:189.60000000000002px;top:369px;" width="10" height="10" viewBox="0 0 10 10"><circle cx="5" cy="5" r="4.15" fill="#fbfbfa" stroke="#5a5655" stroke-width="0.9"/></svg>
<span class="t" id="t71" style="top:368.90px;font-size:10px;line-height:12.00px;color:#111;font-weight:bold;">−</span>
<svg class="b" style="left:222.8px;top:369px;" width="10" height="10" viewBox="0 0 10 10"><circle cx="5" cy="5" r="4.15" fill="#fbfbfa" stroke="#5a5655" stroke-width="0.9"/></svg>
<span class="t" id="t72" style="top:368.90px;font-size:10px;line-height:12.00px;color:#111;font-weight:bold;">+<span style="font-weight:normal;font-size:9px">⇒</span>−</span>
<div class="b" style="left:156.3px;top:400.2px;width:122.2px;height:104.0px;background:#e8e6e2;border:1px solid #8a807f;border-right:2px solid #8a807f;border-bottom:2px solid #8a807f;"></div>
<div class="b" style="left:155.8px;top:385.4px;width:32px;height:15.8px;background:#fff;border:1px solid #bcb6b4;border-bottom:none;border-right:1.5px solid #8a807f;"></div>
<span class="t" id="t73" style="top:387.00px;font-size:8.5px;line-height:10.20px;color:#111;">単独</span>
<div class="b" style="left:187.3px;top:386.59999999999997px;width:37px;height:13.6px;background:#e8e6e2;border:1px solid #cdc8c5;border-bottom:none;"></div>
<span class="t" id="t74" style="top:387.50px;font-size:8.5px;line-height:10.20px;color:#111;">スイープ</span>
<div class="b" style="left:224.3px;top:386.59999999999997px;width:31px;height:13.6px;background:#e8e6e2;border:1px solid #cdc8c5;border-bottom:none;"></div>
<span class="t" id="t75" style="top:387.50px;font-size:8.5px;line-height:10.20px;color:#111;">複数</span>
<span class="t" id="t76" style="top:419.50px;font-size:8.5px;line-height:10.20px;color:#111;">開始</span>
<div class="b" style="left:194.90000000000003px;top:415.4px;width:38.5px;height:19.2px;background:#fff;border:1px solid #aaa6a3;"></div>
<div class="b" style="left:222.10000000000002px;top:417.0px;width:10.1px;height:7.3px;background:#efeeec;"></div>
<div class="b" style="left:222.10000000000002px;top:425.29999999999995px;width:10.1px;height:7.3px;background:#efeeec;"></div>
<svg class="b" style="left:224.60000000000002px;top:419.04999999999995px;" width="5" height="3.2" viewBox="0 0 5 3.2"><path d="M0.4 3L4.6 3L2.5 0.3Z" fill="#111"/></svg>
<svg class="b" style="left:224.60000000000002px;top:427.34999999999997px;" width="5" height="3.2" viewBox="0 0 5 3.2"><path d="M0.4 0.2L4.6 0.2L2.5 2.9Z" fill="#111"/></svg>
<span class="t" id="t77" style="top:418.10px;font-size:9.5px;line-height:11.40px;color:#111;font-family:'DejaVu Sans','Liberation Sans',sans-serif;">0.5</span>
<span class="t" id="t78" style="top:419.40px;font-size:9px;line-height:10.80px;color:#111;font-family:'DejaVu Sans','Liberation Sans',sans-serif;">kV</span>
<span class="t" id="t79" style="top:443.60px;font-size:8.5px;line-height:10.20px;color:#706c6a;">終了</span>
<div class="b" style="left:194.90000000000003px;top:439.5px;width:38.5px;height:19.2px;background:#eceae7;border:1px solid #b8b4b0;"></div>
<div class="b" style="left:222.10000000000002px;top:441.1px;width:10.1px;height:7.3px;background:#e6e4e1;"></div>
<div class="b" style="left:222.10000000000002px;top:449.4px;width:10.1px;height:7.3px;background:#e6e4e1;"></div>
<svg class="b" style="left:224.60000000000002px;top:443.15px;" width="5" height="3.2" viewBox="0 0 5 3.2"><path d="M0.4 3L4.6 3L2.5 0.3Z" fill="#a29f9b"/></svg>
<svg class="b" style="left:224.60000000000002px;top:451.45px;" width="5" height="3.2" viewBox="0 0 5 3.2"><path d="M0.4 0.2L4.6 0.2L2.5 2.9Z" fill="#a29f9b"/></svg>
<span class="t" id="t80" style="top:442.20px;font-size:9.5px;line-height:11.40px;color:#868280;font-family:'DejaVu Sans','Liberation Sans',sans-serif;">0.0</span>
<span class="t" id="t81" style="top:443.50px;font-size:9px;line-height:10.80px;color:#706c6a;font-family:'DejaVu Sans','Liberation Sans',sans-serif;">kV</span>
<span class="t" id="t82" style="top:467.20px;font-size:8.5px;line-height:10.20px;color:#706c6a;">刻み</span>
<div class="b" style="left:194.90000000000003px;top:463.09999999999997px;width:38.5px;height:19.2px;background:#eceae7;border:1px solid #b8b4b0;"></div>
<div class="b" style="left:222.10000000000002px;top:464.7px;width:10.1px;height:7.3px;background:#e6e4e1;"></div>
<div class="b" style="left:222.10000000000002px;top:472.99999999999994px;width:10.1px;height:7.3px;background:#e6e4e1;"></div>
<svg class="b" style="left:224.60000000000002px;top:466.74999999999994px;" width="5" height="3.2" viewBox="0 0 5 3.2"><path d="M0.4 3L4.6 3L2.5 0.3Z" fill="#a29f9b"/></svg>
<svg class="b" style="left:224.60000000000002px;top:475.04999999999995px;" width="5" height="3.2" viewBox="0 0 5 3.2"><path d="M0.4 0.2L4.6 0.2L2.5 2.9Z" fill="#a29f9b"/></svg>
<span class="t" id="t83" style="top:465.80px;font-size:9.5px;line-height:11.40px;color:#868280;font-family:'DejaVu Sans','Liberation Sans',sans-serif;">0.0</span>
<span class="t" id="t84" style="top:467.10px;font-size:9px;line-height:10.80px;color:#706c6a;font-family:'DejaVu Sans','Liberation Sans',sans-serif;">kV</span>
<div class="b" style="left:287px;top:337px;width:146px;height:46.5px;background:#e8e6e2;"></div>
<div class="b" style="left:287px;top:337px;width:47px;height:46.5px;background:#006770;"></div>
<span class="t" id="t85" style="top:370.10px;font-size:8.5px;line-height:10.20px;color:#e6f0f0;">波形</span>

<svg class="b" style="left:294px;top:338.5px;" width="32" height="30" viewBox="0 0 32 30"><path d="M2.8 1.5V27.3H30" stroke="#dff3ef" stroke-width="1.3" fill="none"/><path d="M4.6 27C5.6 12 7.6 5.2 10.3 5C12.8 5 15.5 11 27.2 26.4" stroke="#dff3ef" stroke-width="1.3" fill="none"/></svg>
<div class="b" style="left:343.3px;top:351.5px;width:79.3px;height:18.3px;background:#faf9f8;"></div>
<div class="b" style="left:411px;top:351.5px;width:11.6px;height:18.3px;background:#f0eeeb;"></div>
<span class="t" id="t86" style="top:355.10px;font-size:9.5px;line-height:11.40px;color:#111;font-family:'DejaVu Sans','Liberation Sans',sans-serif;">1.2/50</span>
<svg class="b" style="left:414px;top:359.3px;" width="6" height="4" viewBox="0 0 6 4"><path d="M0.5 0.5L5.5 0.5L3 3.5Z" fill="#111"/></svg>
<div class="b" style="left:287px;top:389.7px;width:146px;height:45.5px;background:#e8e6e2;"></div>
<div class="b" style="left:287px;top:389.7px;width:47px;height:45.5px;background:#006770;"></div>
<span class="t" id="t87" style="top:421.80px;font-size:8.5px;line-height:10.20px;color:#e6f0f0;">放電回数</span>

<svg class="b" style="left:300px;top:391.5px;" width="20" height="29" viewBox="0 0 20 29"><path d="M7.3 1L15.8 1L11.2 11L17 11L4.6 27.5L7.8 14.8L2.8 14.8Z" fill="#eef7f5"/></svg>
<div class="b" style="left:357.8px;top:403.4px;width:51.4px;height:18.2px;background:#fff;border:1px solid #aaa6a3;"></div>
<div class="b" style="left:397.9px;top:405.0px;width:10.1px;height:6.8px;background:#efeeec;"></div>
<div class="b" style="left:397.9px;top:412.79999999999995px;width:10.1px;height:6.8px;background:#efeeec;"></div>
<svg class="b" style="left:400.4px;top:406.79999999999995px;" width="5" height="3.2" viewBox="0 0 5 3.2"><path d="M0.4 3L4.6 3L2.5 0.3Z" fill="#111"/></svg>
<svg class="b" style="left:400.4px;top:414.59999999999997px;" width="5" height="3.2" viewBox="0 0 5 3.2"><path d="M0.4 0.2L4.6 0.2L2.5 2.9Z" fill="#111"/></svg>
<span class="t" id="t88" style="top:406.00px;font-size:9.5px;line-height:11.40px;color:#111;font-family:'DejaVu Sans','Liberation Sans',sans-serif;">5</span>
<div class="b" style="left:287px;top:441px;width:146px;height:47px;background:#e8e6e2;"></div>
<div class="b" style="left:287px;top:441px;width:47px;height:47px;background:#006770;"></div>
<span class="t" id="t89" style="top:474.60px;font-size:8.5px;line-height:10.20px;color:#e6f0f0;">放電間隔</span>

<svg class="b" style="left:295px;top:442px;" width="32" height="32" viewBox="0 0 32 32"><path d="M17.27 3.91A11.3 11.3 0 1 1 4.84 11.99" fill="none" stroke="#e9f4f2" stroke-width="2.9"/><path d="M8.02 4.57L0.97 9.09L9.38 12.83Z" fill="#e9f4f2"/><path d="M11.40 13.20L15.70 15.70L20.90 9.40" fill="none" stroke="#e9f4f2" stroke-width="1.7"/></svg>
<div class="b" style="left:357.8px;top:455.7px;width:41.8px;height:18.2px;background:#fff;border:1px solid #aaa6a3;"></div>
<div class="b" style="left:388.3px;top:457.3px;width:10.1px;height:6.8px;background:#efeeec;"></div>
<div class="b" style="left:388.3px;top:465.09999999999997px;width:10.1px;height:6.8px;background:#efeeec;"></div>
<svg class="b" style="left:390.8px;top:459.09999999999997px;" width="5" height="3.2" viewBox="0 0 5 3.2"><path d="M0.4 3L4.6 3L2.5 0.3Z" fill="#111"/></svg>
<svg class="b" style="left:390.8px;top:466.9px;" width="5" height="3.2" viewBox="0 0 5 3.2"><path d="M0.4 0.2L4.6 0.2L2.5 2.9Z" fill="#111"/></svg>
<span class="t" id="t90" style="top:458.30px;font-size:9.5px;line-height:11.40px;color:#111;font-family:'DejaVu Sans','Liberation Sans',sans-serif;">60</span>
<span class="t" id="t91" style="top:459.90px;font-size:8.5px;line-height:10.20px;color:#111;">秒</span>
<div class="b" style="left:448.5px;top:110px;width:192.5px;height:88.8px;background:#e8e6e2;"></div>
<div class="b" style="left:645px;top:110px;width:218.5px;height:88.8px;background:#e8e6e2;"></div>
<div class="b" style="left:867px;top:110px;width:92px;height:88.8px;background:#e8e6e2;"></div>
<div class="b" style="left:448.5px;top:202.7px;width:510.5px;height:23.3px;background:#e8e6e2;"></div>
<div class="b" style="left:448.5px;top:228.5px;width:510.5px;height:286.5px;background:#e8e6e2;"></div>
<span class="t" id="t92" style="top:115.80px;font-size:9px;line-height:10.80px;color:#111;">試験時間：</span>
<span class="t" id="t93" style="top:114.72px;font-size:10.8px;line-height:12.96px;color:#111;font-family:'DejaVu Sans','Liberation Sans',sans-serif;">0h  4m 10s</span>
<span class="t" id="t94" style="top:133.10px;font-size:9px;line-height:10.80px;color:#111;">トータル試験時間：</span>
<span class="t" id="t95" style="top:132.72px;font-size:10.8px;line-height:12.96px;color:#111;font-family:'DejaVu Sans','Liberation Sans',sans-serif;">0h 14m 10s</span>
<span class="t" id="t96" style="top:149.60px;font-size:9px;line-height:10.80px;color:#111;">残り試験時間(目安)：</span>
<span class="t" id="t97" style="top:149.92px;font-size:10.8px;line-height:12.96px;color:#111;font-family:'DejaVu Sans','Liberation Sans',sans-serif;">0h 14m 30s</span>
<span class="t" id="t98" style="top:166.60px;font-size:9px;line-height:10.80px;color:#111;">放電間隔[s]：</span>
<span class="t" id="t99" style="top:166.92px;font-size:10.8px;line-height:12.96px;color:#111;font-family:'DejaVu Sans','Liberation Sans',sans-serif;">10 /  60</span>
<span class="t" id="t100" style="top:183.60px;font-size:9px;line-height:10.80px;color:#111;">放電回数：</span>
<span class="t" id="t101" style="top:183.92px;font-size:10.8px;line-height:12.96px;color:#111;font-family:'DejaVu Sans','Liberation Sans',sans-serif;">0 /   5</span>
<span class="t" id="t102" style="top:115.10px;font-size:10.5px;line-height:12.60px;color:#221a1a;font-family:'DejaVu Sans','Liberation Sans',sans-serif;">EUT LINE</span>
<div class="b" style="left:666.4px;top:133.4px;width:30.4px;height:59.5px;background:#032b19;border:1px solid #0c120e;"></div>
<span class="t" id="t103" style="top:142.80px;font-size:10px;line-height:12.00px;color:#7b7675;font-weight:bold;">OFF</span>
<div class="b" style="left:671px;top:169.3px;width:21.3px;height:17.3px;background:#1d1416;"></div>
<div class="b" style="left:721px;top:145.6px;width:57.5px;height:36px;background:#80777a;border-radius:6px;border:1px solid #8e8688;"></div>
<svg class="b" style="left:742px;top:155px;" width="18" height="17" viewBox="0 0 18 17"><path d="M1 1L16.5 8.5L1 16Z" fill="#e3dfdd"/></svg>
<div class="b" style="left:792px;top:145.6px;width:57.5px;height:36px;background:#8a8183;border-radius:6px;border:1px solid #958d8f;"></div>
<div class="b" style="left:811.5px;top:156px;width:17.5px;height:14.5px;background:#dedad8;border-radius:1.5px;"></div>
<div class="b" style="left:875px;top:117px;width:77px;height:76.5px;background:#4a070b;border-radius:3px;border:1px solid #7a4a4d;border-top-color:#9a7677;border-right-color:#3a0508;border-bottom-color:#3a0508;"></div>
<svg class="b" style="left:880px;top:123px;" width="69" height="62" viewBox="0 0 69 62"><path d="M31.90 9.67Q33.90 6.20 35.94 9.64L61.26 52.36Q63.30 55.80 59.30 55.80L9.30 55.80Q5.30 55.80 7.30 52.33Z" fill="none" stroke="#633439" stroke-width="3.3" stroke-linejoin="round"/><path d="M34.2 21.5L30.6 36.2L37.2 33.8L34.7 45" fill="none" stroke="#633439" stroke-width="2.5"/><path d="M31.2 42.8L34.4 49.8L38 43.6Z" fill="#633439"/></svg>
<span class="t" id="t104" style="top:208.60px;font-size:9px;line-height:10.80px;color:#111;">試験開始日時：</span>
<div class="b" style="left:537px;top:205px;width:155px;height:19px;background:#fff;border:1px solid #aca7a4;border-radius:2px;"></div>
<span class="t" id="t105" style="top:208.60px;font-size:9px;line-height:10.80px;color:#111;">----年--月--日 --時--分</span>
<svg class="b" style="left:673.5px;top:209.5px;" width="8" height="9" viewBox="0 0 8 9"><rect x="0.5" y="0.5" width="5.5" height="7.5" fill="#e4e2df" stroke="#77716f" stroke-width="0.8"/><path d="M6.5 2V8.5H2" stroke="#77716f" stroke-width="0.8" fill="none"/></svg>
<svg class="b" style="left:682.5px;top:212px;" width="6" height="4" viewBox="0 0 6 4"><path d="M0.5 0.5L5.5 0.5L3 3.5Z" fill="#1f3d8a"/></svg>
<span class="t" id="t106" style="top:208.60px;font-size:9px;line-height:10.80px;color:#111;">試験終了日時：</span>
<div class="b" style="left:792px;top:205px;width:151.6px;height:19px;background:#fff;border:1px solid #aca7a4;border-radius:2px;"></div>
<span class="t" id="t107" style="top:208.60px;font-size:9px;line-height:10.80px;color:#111;">----年--月--日 --時--分</span>
<svg class="b" style="left:925.1px;top:209.5px;" width="8" height="9" viewBox="0 0 8 9"><rect x="0.5" y="0.5" width="5.5" height="7.5" fill="#e4e2df" stroke="#77716f" stroke-width="0.8"/><path d="M6.5 2V8.5H2" stroke="#77716f" stroke-width="0.8" fill="none"/></svg>
<svg class="b" style="left:934.1px;top:212px;" width="6" height="4" viewBox="0 0 6 4"><path d="M0.5 0.5L5.5 0.5L3 3.5Z" fill="#1f3d8a"/></svg>
<div class="b" style="left:457px;top:233.5px;width:145.3px;height:23px;border:1px solid #7d7777;"></div>
<span class="t" id="t108" style="top:239.30px;font-size:8.5px;line-height:10.20px;color:#111;">実行順編集：</span>
<svg class="b" style="left:522px;top:239.6px;" width="10" height="10" viewBox="0 0 10 10"><circle cx="5" cy="5" r="4.15" fill="#fbfbfa" stroke="#5a5655" stroke-width="0.9"/></svg>
<span class="t" id="t109" style="top:239.00px;font-size:8.5px;line-height:10.20px;color:#111;">可</span>
<svg class="b" style="left:553.6px;top:239.6px;" width="10" height="10" viewBox="0 0 10 10"><circle cx="5" cy="5" r="4.6" fill="#123f9e"/><circle cx="5" cy="5" r="1.8" fill="#fff"/></svg>
<span class="t" id="t110" style="top:239.00px;font-size:8.5px;line-height:10.20px;color:#111;">不可</span>
<div class="b" style="left:607px;top:233.5px;width:156px;height:23px;border:1px solid #7d7777;"></div>
<span class="t" id="t111" style="top:239.30px;font-size:8.5px;line-height:10.20px;color:#111;">開始位置：</span>
<svg class="b" style="left:663px;top:239.6px;" width="10" height="10" viewBox="0 0 10 10"><circle cx="5" cy="5" r="4.15" fill="#fbfbfa" stroke="#5a5655" stroke-width="0.9"/></svg>
<span class="t" id="t112" style="top:239.00px;font-size:8.5px;line-height:10.20px;color:#111;">最初</span>
<svg class="b" style="left:703.6px;top:239.6px;" width="10" height="10" viewBox="0 0 10 10"><circle cx="5" cy="5" r="4.6" fill="#123f9e"/><circle cx="5" cy="5" r="1.8" fill="#fff"/></svg>
<span class="t" id="t113" style="top:239.00px;font-size:8.5px;line-height:10.20px;color:#111;">選択箇所</span>
<svg class="b" style="left:770.7px;top:236.2px;" width="17" height="17" viewBox="0 0 17 17"><circle cx="8.5" cy="8.5" r="8.2" fill="#123f9e"/><text x="8.5" y="13.2" font-size="13" font-weight="bold" fill="#fff" text-anchor="middle" font-family="Liberation Sans,sans-serif">?</text></svg>
<div class="b" style="left:454.5px;top:262px;width:500px;height:250px;background:#fff;border:1px solid #8a807f;"></div>
<div class="b" style="left:455.5px;top:280px;width:494.9px;height:15.3px;background:#006770;"></div>
<div class="b" style="left:489.6px;top:263px;width:1px;height:248px;background:#eeebe7;"></div>
<div class="b" style="left:525.6px;top:263px;width:1px;height:248px;background:#eeebe7;"></div>
<div class="b" style="left:576.2px;top:263px;width:1px;height:248px;background:#eeebe7;"></div>
<div class="b" style="left:604.1px;top:263px;width:1px;height:248px;background:#eeebe7;"></div>
<div class="b" style="left:652.0px;top:263px;width:1px;height:248px;background:#eeebe7;"></div>
<div class="b" style="left:733.8px;top:263px;width:1px;height:248px;background:#eeebe7;"></div>
<div class="b" style="left:784.5px;top:263px;width:1px;height:248px;background:#eeebe7;"></div>
<div class="b" style="left:949.7px;top:263px;width:1px;height:248px;background:#eeebe7;"></div>
<div class="b" style="left:455.5px;top:294.8px;width:498px;height:1px;background:#eeebe7;"></div>
<div class="b" style="left:455.5px;top:310.8px;width:498px;height:1px;background:#eeebe7;"></div>
<div class="b" style="left:455.5px;top:326.8px;width:498px;height:1px;background:#eeebe7;"></div>
<div class="b" style="left:455.5px;top:342.8px;width:498px;height:1px;background:#eeebe7;"></div>
<div class="b" style="left:455.5px;top:358.8px;width:498px;height:1px;background:#eeebe7;"></div>
<div class="b" style="left:455.5px;top:374.8px;width:498px;height:1px;background:#eeebe7;"></div>
<div class="b" style="left:455.5px;top:390.8px;width:498px;height:1px;background:#eeebe7;"></div>
<div class="b" style="left:455.5px;top:406.8px;width:498px;height:1px;background:#eeebe7;"></div>
<div class="b" style="left:455.5px;top:422.8px;width:498px;height:1px;background:#eeebe7;"></div>
<div class="b" style="left:455.5px;top:438.8px;width:498px;height:1px;background:#eeebe7;"></div>
<div class="b" style="left:455.5px;top:454.8px;width:498px;height:1px;background:#eeebe7;"></div>
<div class="b" style="left:455.5px;top:470.8px;width:498px;height:1px;background:#eeebe7;"></div>
<div class="b" style="left:455.5px;top:486.8px;width:498px;height:1px;background:#eeebe7;"></div>
<div class="b" style="left:455.5px;top:502.8px;width:498px;height:1px;background:#eeebe7;"></div>
<div class="b" style="left:489.6px;top:280px;width:1px;height:15.3px;background:#9cc5c8;"></div>
<div class="b" style="left:525.6px;top:280px;width:1px;height:15.3px;background:#9cc5c8;"></div>
<div class="b" style="left:576.2px;top:280px;width:1px;height:15.3px;background:#9cc5c8;"></div>
<div class="b" style="left:604.1px;top:280px;width:1px;height:15.3px;background:#9cc5c8;"></div>
<div class="b" style="left:652.0px;top:280px;width:1px;height:15.3px;background:#9cc5c8;"></div>
<div class="b" style="left:733.8px;top:280px;width:1px;height:15.3px;background:#9cc5c8;"></div>
<div class="b" style="left:784.5px;top:280px;width:1px;height:15.3px;background:#9cc5c8;"></div>
<span class="t" id="t114" style="top:265.20px;font-size:8.5px;line-height:10.20px;color:#111;">Step</span>
<span class="t" id="t115" style="top:265.20px;font-size:8.5px;line-height:10.20px;color:#111;">判定</span>
<span class="t" id="t116" style="top:265.20px;font-size:8.5px;line-height:10.20px;color:#111;">モード</span>
<span class="t" id="t117" style="top:265.20px;font-size:8.5px;line-height:10.20px;color:#111;">極性</span>
<span class="t" id="t118" style="top:265.20px;font-size:8.5px;line-height:10.20px;color:#111;">電圧 [kV]</span>
<span class="t" id="t119" style="top:265.20px;font-size:8.5px;line-height:10.20px;color:#111;">印加相-リターン相</span>
<span class="t" id="t120" style="top:265.20px;font-size:8.5px;line-height:10.20px;color:#111;">位相角 [°]</span>
<span class="t" id="t121" style="top:265.20px;font-size:8.5px;line-height:10.20px;color:#111;">コメント</span>
<svg class="b" style="left:458.3px;top:283.25px;" width="9.5" height="9.5" viewBox="0 0 9.5 9.5"><rect x="0" y="0" width="9.5" height="9.5" rx="2.1" fill="#123f9e"/><path d="M2.5 5L4.1 6.6L7.1 3.3" stroke="#e8eefc" stroke-width="0.9" fill="none"/></svg>
<svg class="b" style="left:458.3px;top:283.25px;" width="9.5" height="9.5" viewBox="0 0 9.5 9.5"><rect x="0" y="0" width="9.5" height="9.5" rx="2.1" fill="#123f9e"/><path d="M2.5 5L4.1 6.6L7.1 3.3" stroke="#e8eefc" stroke-width="0.9" fill="none"/></svg>
<span class="t" id="t122" style="top:281.70px;font-size:9.5px;line-height:11.40px;color:#e8f2f2;font-family:'DejaVu Sans','Liberation Sans',sans-serif;">1</span>
<span class="t" id="t123" style="top:282.60px;font-size:8.5px;line-height:10.20px;color:#e8f2f2;">------</span>
<span class="t" id="t124" style="top:282.60px;font-size:8.5px;line-height:10.20px;color:#e8f2f2;">NORMAL</span>
<span class="t" id="t125" style="top:282.60px;font-size:10px;line-height:12.00px;color:#e8f2f2;">+</span>
<span class="t" id="t126" style="top:283.20px;font-size:9px;line-height:10.80px;color:#e8f2f2;font-family:'DejaVu Sans','Liberation Sans',sans-serif;">0.5</span>
<span class="t" id="t127" style="top:282.60px;font-size:8.5px;line-height:10.20px;color:#e8f2f2;white-space:pre;">L  - N</span>
<span class="t" id="t128" style="top:282.60px;font-size:8.5px;line-height:10.20px;color:#e8f2f2;">------</span>
<svg class="b" style="left:458.3px;top:298.95px;" width="9.5" height="9.5" viewBox="0 0 9.5 9.5"><rect x="0" y="0" width="9.5" height="9.5" rx="2.1" fill="#123f9e"/><path d="M2.5 5L4.1 6.6L7.1 3.3" stroke="#e8eefc" stroke-width="0.9" fill="none"/></svg>
<span class="t" id="t129" style="top:297.40px;font-size:9.5px;line-height:11.40px;color:#111;font-family:'DejaVu Sans','Liberation Sans',sans-serif;">2</span>
<span class="t" id="t130" style="top:298.30px;font-size:8.5px;line-height:10.20px;color:#111;">------</span>
<span class="t" id="t131" style="top:298.30px;font-size:8.5px;line-height:10.20px;color:#111;">COMMON</span>
<span class="t" id="t132" style="top:298.30px;font-size:10px;line-height:12.00px;color:#111;">+</span>
<span class="t" id="t133" style="top:298.90px;font-size:9px;line-height:10.80px;color:#111;font-family:'DejaVu Sans','Liberation Sans',sans-serif;">0.5</span>
<span class="t" id="t134" style="top:298.30px;font-size:8.5px;line-height:10.20px;color:#111;white-space:pre;">L  - PE</span>
<span class="t" id="t135" style="top:298.30px;font-size:8.5px;line-height:10.20px;color:#111;">------</span>
<svg class="b" style="left:458.3px;top:314.95px;" width="9.5" height="9.5" viewBox="0 0 9.5 9.5"><rect x="0" y="0" width="9.5" height="9.5" rx="2.1" fill="#123f9e"/><path d="M2.5 5L4.1 6.6L7.1 3.3" stroke="#e8eefc" stroke-width="0.9" fill="none"/></svg>
<span class="t" id="t136" style="top:313.40px;font-size:9.5px;line-height:11.40px;color:#111;font-family:'DejaVu Sans','Liberation Sans',sans-serif;">3</span>
<span class="t" id="t137" style="top:314.30px;font-size:8.5px;line-height:10.20px;color:#111;">------</span>
<span class="t" id="t138" style="top:314.30px;font-size:8.5px;line-height:10.20px;color:#111;">COMMON</span>
<span class="t" id="t139" style="top:314.30px;font-size:10px;line-height:12.00px;color:#111;">+</span>
<span class="t" id="t140" style="top:314.90px;font-size:9px;line-height:10.80px;color:#111;font-family:'DejaVu Sans','Liberation Sans',sans-serif;">0.5</span>
<span class="t" id="t141" style="top:314.30px;font-size:8.5px;line-height:10.20px;color:#111;white-space:pre;">N  - PE</span>
<span class="t" id="t142" style="top:314.30px;font-size:8.5px;line-height:10.20px;color:#111;">------</span>
<div class="b" style="left:967.3px;top:0px;width:0.7px;height:523px;background:#55606a;"></div>
<svg class="b" style="left:962px;top:0px;" width="6" height="6" viewBox="0 0 6 6"><path d="M6 0V6Q5.6 1 0 0Z" fill="#1a1a2a"/></svg>
<svg class="b" style="left:0px;top:0px;" width="5" height="5" viewBox="0 0 5 5"><path d="M0 0V5Q0.4 0.8 5 0Z" fill="#2a2a3a"/></svg>
</body></html>
